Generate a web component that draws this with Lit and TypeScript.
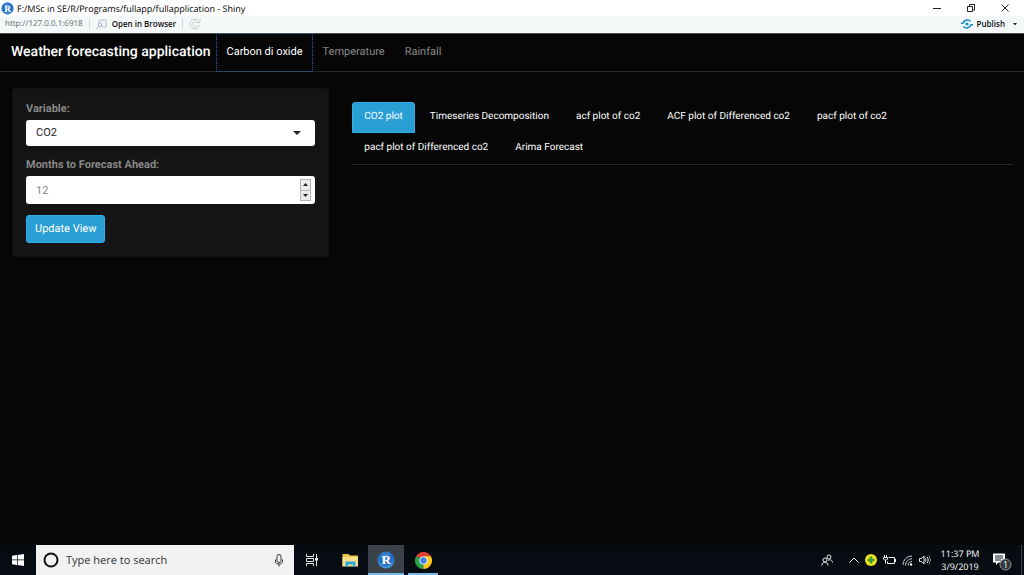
import { LitElement, html, css, svg } from "lit";
import { customElement, state } from "lit/decorators.js";
import { classMap } from "lit/directives/class-map.js";

const rLogo = (id: string) => svg`
  <defs>
    <radialGradient id=${id} cx="50%" cy="35%" r="65%">
      <stop offset="0" stop-color="#4f9be6" />
      <stop offset="0.6" stop-color="#2369bd" />
      <stop offset="1" stop-color="#4aa3e8" />
    </radialGradient>
  </defs>
  <circle cx="9" cy="9" r="8.5" fill="url(#${id})" />
  <text x="9.3" y="13.3" text-anchor="middle" font-family="Liberation Serif, serif" font-weight="700" font-size="13" fill="#fff">R</text>`;

@customElement("window-chrome")
export class WindowChrome extends LitElement {
  static styles = css`
    :host { display: block; background: #fff; color: #111; font-family: "Open Sans", "Noto Sans", sans-serif; }
    svg { display: block; flex: none; }
    button { border: 0; background: none; padding: 0; font: inherit; color: inherit; display: flex; align-items: center; }
    .title { display: flex; align-items: center; height: 16px; padding-left: 1px; }
    .name { margin: 0 auto 0 3px; font-size: 9px; line-height: 15px; font-weight: 400; color: #000; white-space: nowrap; }
    .controls { display: flex; gap: 24px; padding-right: 14px; }
    .tools { display: flex; align-items: center; height: 16px; background: #f4f8f9; border-bottom: 1px solid #fff; font-size: 8px; line-height: 16px; padding: 0 7px 0 5px; }
    .url { color: #606769; }
    .sep { width: 1px; height: 10px; background: #cfd5d8; margin: 0 6px; }
    .open { gap: 5px; font-weight: 600; color: #111; }
    .publish { gap: 4px; font-weight: 600; margin-left: auto; }
    .menu { margin-left: 8px; }
  `;
  render() {
    return html`
      <header class="title">
        <svg width="13" height="13" viewBox="0 0 18 18">${rLogo("rt")}</svg>
        <h1 class="name">F:/MSc in SE/R/Programs/fullapp/fullapplication - Shiny</h1>
        <div class="controls">
          <button aria-label="Minimize"><svg width="10" height="10"><path d="M1 5.500h8" stroke="#222" /></svg></button>
          <button aria-label="Restore"><svg width="10" height="10" fill="none" stroke="#222"><path d="M1.500 3.500h5v5h-5zM3.500 3V1.500h5v5.500H7" /></svg></button>
          <button aria-label="Close"><svg width="10" height="10"><path d="M1.500 1.500l7 7M8.500 1.500l-7 7" stroke="#222" /></svg></button>
        </div>
      </header>
      <div class="tools">
        <span class="url">http://127.0.0.1:6918</span>
        <span class="sep"></span>
        <button class="open">
          <svg width="11" height="10" fill="none" stroke="#b9c5cf">
            <path d="M3 4V2Q3 1 4 1h5.500q1 0 1 1v5q0 1-1 1H6" fill="#e8f0f5" /><circle cx="4" cy="6" r="1.800" stroke="#a5b1bd" /><path d="M.5 9.500L2.700 7.300" stroke="#a5b1bd" />
          </svg>
          Open in Browser
        </button>
        <span class="sep"></span>
        <button aria-label="Reload">
          <svg width="12" height="12" fill="none" stroke="#c3c9ce">
            <path d="M10.500 7A4.800 4.800 0 1 1 9 2.400M11 1v3.500H7.500" /><path d="M8.200 7a2.400 2.400 0 1 1-.6-2.800" />
          </svg>
        </button>
        <button class="publish">
          <svg width="12" height="10" fill="none" stroke="#1c8fd0" stroke-width="1.600">
            <circle cx="6" cy="5" r="1.600" fill="#1c8fd0" stroke="none" />
            <path d="M0 4.300h2C3 .8 7.500 0 9.500 2.500M12 5.700h-2C9 9.200 4.500 10 2.500 7.500" />
          </svg>
          Publish
        </button>
        <button class="menu" aria-label="Publish options"><svg width="4" height="3"><path d="M0 0h4L2 2.500z" fill="#222" /></svg></button>
      </div>`;
  }
}

@customElement("task-bar")
export class TaskBar extends LitElement {
  static styles = css`
    :host { display: flex; height: 30px; background: #070c12; color: #fff; font-family: "Open Sans", "Noto Sans", sans-serif; }
    svg { display: block; flex: none; }
    button { border: 0; background: none; padding: 0; font: inherit; color: inherit; display: flex; align-items: center; justify-content: center; }
    .start { width: 36px; }
    .search { display: flex; align-items: center; width: 258px; background: #f2f2f2; padding: 0 10px 0 7px; box-sizing: border-box; }
    .query { flex: 1; min-width: 0; border: 0; padding: 0; margin-left: 7px; background: none; outline: 0; font: 11px "Open Sans", sans-serif; color: #333; text-rendering: inherit; }
    .query::placeholder { color: #333; opacity: 1; }
    .app { width: 36px; box-sizing: border-box; border: solid transparent; border-width: 2px 0; }
    .view { margin-right: 2px; }
    .running { border-bottom-color: #76b9ed; }
    .active { background: #3a4149; border-top-color: #3a4149; }
    .chrome { width: 30px; margin-left: 4px; }
    .tray { display: flex; align-items: center; margin-left: auto; }
    .people { margin-right: 16px; }
    .icons { display: flex; align-items: center; gap: 6px; }
    .clock { width: 54px; margin: 0 6px 0 2px; text-align: center; font-size: 9px; line-height: 13px; }
    .edge { width: 1px; height: 30px; background: #3c4248; margin: 0 2px 0 8px; }
  `;
  render() {
    return html`
      <button class="start" aria-label="Start">
        <svg width="12" height="12" fill="#fff"><path d="M0 1.700l5-.7v4.600H0zM5.700.9L12 0v5.600H5.700zM0 6.300h5V11l-5-.7zM5.700 6.300H12V12l-6.300-.9z" /></svg>
      </button>
      <label class="search">
        <svg width="16" height="16"><circle cx="8" cy="8" r="6.500" fill="none" stroke="#111" stroke-width="2" /></svg>
        <input class="query" type="text" placeholder="Type here to search" aria-label="Type here to search" />
        <svg width="10" height="14" fill="none" stroke="#333"><rect x="3" y="1.500" width="4" height="8" rx="2" /><path d="M1.500 6.500v2c0 2 1.500 2.500 3.500 2.500s3.500-.5 3.500-2.500v-2M5 11v2.500" /></svg>
      </label>
      <button class="app view" aria-label="Task view">
        <svg width="13" height="12" fill="none" stroke="#e6e6e6"><path d="M.5 0v2.500h7V0M.5 12V9.500h7V12M.5 4.500h7v3h-7zM10.500 0v12" /><path d="M10.500 4v2.500" stroke-width="3" /></svg>
      </button>
      <button class="app" aria-label="File Explorer">
        <svg width="17" height="15"><path d="M.5 1h6l1.500 1.500h8V13H.5z" fill="#f0c34e" /><path d="M.5 4h15.500v9.500H.5z" fill="#fbe08a" /><path d="M3.500 14V8.500h10V14H11v-2.500H6V14z" fill="#2fa5e4" /></svg>
      </button>
      <button class="app running active" aria-label="RStudio"><svg width="18" height="18">${rLogo("rb")}</svg></button>
      <button class="app running chrome" aria-label="Google Chrome">
        <svg width="17" height="17" viewBox="0 0 18 18">
          <path d="M9 9L1.200 4.500A9 9 0 0 1 16.800 4.500z" fill="#e34133" /><path d="M9 9L16.800 4.500A9 9 0 0 1 9 18z" fill="#fbc91b" />
          <path d="M9 9L9 18A9 9 0 0 1 1.200 4.500z" fill="#29a24b" /><path d="M9 4.500h7.800L13 11.200 9 18 9 13z" fill="#fbc91b" />
          <circle cx="9" cy="9" r="4.300" fill="#fff" /><circle cx="9" cy="9" r="3.400" fill="#3f7fe8" />
        </svg>
      </button>
      <div class="tray">
        <button class="people" aria-label="People">
          <svg width="12" height="12" fill="none" stroke="#e8e8e8"><circle cx="8" cy="3" r="2" /><circle cx="4" cy="6" r="2" /><path d="M.8 11.500c.3-4.500 5.800-4.500 6.200 0M7 6.500c2-1.500 4.300-.5 4.500 2" /></svg>
        </button>
        <div class="icons">
          <svg width="10" height="6" fill="none" stroke="#fff"><path d="M.5 5.500L5 1l4.500 4.500" /></svg>
          <svg width="12" height="12"><circle cx="6" cy="6" r="6" fill="#f2e51c" /><path d="M6 2.500v7M2.500 6h7" stroke="#3e9a35" stroke-width="2.600" /></svg>
          <svg width="13" height="10" fill="none" stroke="#eee"><path d="M5.500 2.500h6v6h-7v-2M12.500 4v3M1.500 0v2M3.500 0v2M.5 2.500h4v1.500l-1 1h-2l-1-1zM2.500 5v3.500" /></svg>
          <svg width="11" height="11" fill="none" stroke="#ccc"><path d="M1 10C1 5 5 1 10 1M3.500 10.500C3.500 6.500 6.500 3.800 10 3.800M6 10.500c0-2.500 1.800-4 4-4" /><circle cx="9" cy="9.500" r="1.200" fill="#fff" stroke="none" /></svg>
          <svg width="12" height="10" fill="none" stroke="#eee"><path d="M.5 3.500h1.800L5 1v8L2.300 6.500H.5zM6.500 3.500q1 1.500 0 3M8.300 2q2 3 0 6" /><path d="M10 .8q3 4.200 0 8.400" stroke="#888" /></svg>
        </div>
        <time class="clock">11:37 PM<br />3/9/2019</time>
        <button aria-label="1 notification">
          <svg width="20" height="21"><path d="M0 3.500h12v9H5.500L3 15v-2.500H0z" fill="#fff" /><path d="M2 6h8M2 8h8M2 10h6" stroke="#111820" /><circle cx="12.500" cy="14.500" r="5.500" fill="#32373c" stroke="#999" /><text x="12.500" y="18" text-anchor="middle" font-size="9" fill="#fff">1</text></svg>
        </button>
        <span class="edge"></span>
      </div>`;
  }
}

@customElement("app-root")
export class AppRoot extends LitElement {
  static styles = css`
    :host { display: flex; flex-direction: column; min-height: 100vh; background: #060606; color: #888; font: 11px/16px Roboto, sans-serif; text-rendering: geometricPrecision; }
    a { color: inherit; text-decoration: none; }
    button, input, select { font: inherit; box-sizing: border-box; margin: 0; text-rendering: inherit; }
    .navbar { display: flex; height: 39px; box-sizing: border-box; border-top: 1px solid #484c48; border-bottom: 1px solid #282828; }
    .brand { padding: 10px 6px 0 11px; font-size: 14px; font-weight: 500; color: #fff; }
    .pages { display: flex; margin: -1px 0; }
    .page { padding: 10px 9px; border: 1px dotted transparent; }
    .page.current { color: #fff; border-color: #2866ad; }
    .content { flex: 1; display: flex; align-items: flex-start; padding-top: 16px; }
    .side { width: 33.333%; box-sizing: border-box; padding: 0 12px; }
    .main { width: 66.667%; box-sizing: border-box; padding: 14px 11px 0 11px; }
    .well { display: flex; flex-direction: column; align-items: stretch; padding: 12px 13px 13px; background: #151515; border: 1px solid #101010; border-radius: 3px; margin: 0; }
    .label { font-weight: 700; margin-bottom: 3px; }
    .field { position: relative; margin-bottom: 11px; }
    .control { display: block; width: 100%; height: 26px; padding: 0 10px; border: 0; border-radius: 3px; background: #fff; color: #282828; appearance: none; outline: 0; }
    .number { height: 28px; color: #888; appearance: textfield; }
    .number::-webkit-inner-spin-button { appearance: none; }
    .caret { position: absolute; right: 14px; top: 11px; pointer-events: none; }
    .steps { position: absolute; right: 4px; top: 3px; display: grid; width: 11px; height: 22px; border: 1px solid #b4b4b4; box-sizing: border-box; }
    .step { display: grid; place-items: center; padding: 0; border: 0; background: #ececec; }
    .step + .step { border-top: 1px solid #b4b4b4; }
    .update { align-self: flex-start; height: 28px; padding: 0 8px; border: 1px solid #2fb0ec; border-radius: 3px; background: #2a9fd6; color: #fff; }
    .tabs { display: flex; flex-wrap: wrap; column-gap: 3px; border-bottom: 1px solid #282828; font-size: 10px; }
    .tab { padding: 6px 11px 7px; border: 1px solid transparent; border-radius: 3px 3px 0 0; color: #fff; }
    .tab.current { background: #2a9fd6; border-color: #2fb0ec; }
  `;

  @state() page = "Carbon di oxide";
  @state() tab = "CO2 plot";

  private pages = ["Carbon di oxide", "Temperature", "Rainfall"];
  private tabs = [
    "CO2 plot", "Timeseries Decomposition", "acf plot of co2", "ACF plot of Differenced co2",
    "pacf plot of co2", "pacf plot of Differenced co2", "Arima Forecast",
  ];

  private step(by: number) {
    const input = this.renderRoot.querySelector<HTMLInputElement>("#months")!;
    by > 0 ? input.stepUp() : input.stepDown();
  }

  render() {
    return html`
      <window-chrome></window-chrome>
      <nav class="navbar">
        <a class="brand" href="#">Weather forecasting application</a>
        <div class="pages">
          ${this.pages.map((p) => html`<a href="#" class=${classMap({ page: true, current: p === this.page })}
            @click=${() => (this.page = p)}>${p}</a>`)}
        </div>
      </nav>
      <main class="content">
        <div class="side">
          <form class="well" @submit=${(e: Event) => e.preventDefault()}>
            <label class="label" for="variable">Variable:</label>
            <div class="field">
              <select class="control" id="variable"><option>CO2</option></select>
              <svg class="caret" width="8" height="4"><path d="M0 0h8L4 4z" fill="#222" /></svg>
            </div>
            <label class="label" for="months">Months to Forecast Ahead:</label>
            <div class="field">
              <input class="control number" id="months" type="number" value="12" />
              <div class="steps">
                <button type="button" class="step" aria-label="Increase" @click=${() => this.step(1)}><svg width="5" height="3"><path d="M0 3h5L2.500 0z" fill="#222" /></svg></button>
                <button type="button" class="step" aria-label="Decrease" @click=${() => this.step(-1)}><svg width="5" height="3"><path d="M0 0h5L2.500 3z" fill="#222" /></svg></button>
              </div>
            </div>
            <button class="update">Update View</button>
          </form>
        </div>
        <section class="main">
          <nav class="tabs">
            ${this.tabs.map((t) => html`<a href="#" class=${classMap({ tab: true, current: t === this.tab })}
              @click=${() => (this.tab = t)}>${t}</a>`)}
          </nav>
        </section>
      </main>
      <task-bar></task-bar>`;
  }
}
